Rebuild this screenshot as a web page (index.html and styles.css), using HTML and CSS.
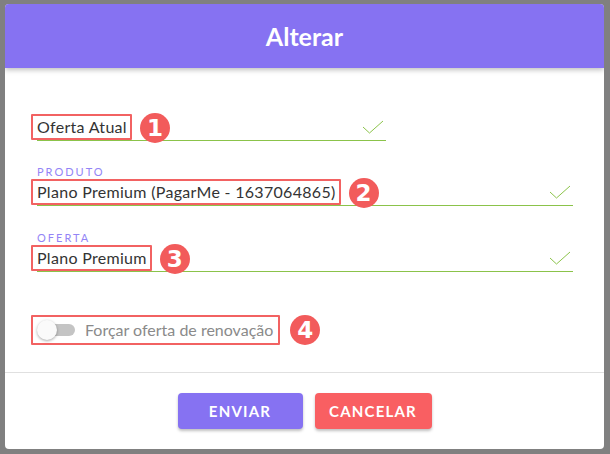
FILE: index.html
```html
<!DOCTYPE html>
<html>
<head>
  <title>Alterar</title>
  <link rel="stylesheet" href="styles.css">
</head>
<body>
  <div class="dialog">
    <div class="dialog-header">Alterar</div>

    <div class="dialog-body">
      <div class="field field-short">
        <div class="field-row">
          <span class="mark">Oferta Atual</span>
          <span class="badge">1</span>
          <svg class="check" width="22" height="14" viewBox="0 0 22 14"><polyline points="1,7 7.5,13 21,1" fill="none" stroke="#8bc34a" stroke-width="1"/></svg>
        </div>
      </div>

      <div class="field field-produto">
        <div class="field-label">Produto</div>
        <div class="field-row">
          <span class="mark">Plano Premium (PagarMe - 1637064865)</span>
          <span class="badge">2</span>
          <svg class="check" width="22" height="14" viewBox="0 0 22 14"><polyline points="1,7 7.5,13 21,1" fill="none" stroke="#8bc34a" stroke-width="1"/></svg>
        </div>
      </div>

      <div class="field field-oferta">
        <div class="field-label">Oferta</div>
        <div class="field-row">
          <span class="mark">Plano Premium</span>
          <span class="badge">3</span>
          <svg class="check" width="22" height="14" viewBox="0 0 22 14"><polyline points="1,7 7.5,13 21,1" fill="none" stroke="#8bc34a" stroke-width="1"/></svg>
        </div>
      </div>

      <div class="toggle-row">
        <label class="mark toggle">
          <span class="switch"><span class="knob"></span></span>
          <span class="toggle-text">Forçar oferta de renovação</span>
        </label>
        <span class="badge">4</span>
      </div>
    </div>

    <div class="dialog-footer">
      <button class="btn btn-send">Enviar</button>
      <button class="btn btn-cancel">Cancelar</button>
    </div>
  </div>
</body>
</html>
```

FILE: styles.css
```css
html, body {
  margin: 0;
  height: 100%;
}
body {
  background: #808080;
  padding: 4px 6px 5px 5px;
  box-sizing: border-box;
  font-family: Lato, "Open Sans", sans-serif;
}
.dialog {
  background: #fff;
  height: 445px;
  border-radius: 4px;
  overflow: hidden;
  display: flex;
  flex-direction: column;
}
.dialog-header {
  height: 64px;
  background: #8672f2;
  color: #fff;
  font-size: 25px;
  font-weight: bold;
  display: flex;
  align-items: center;
  justify-content: center;
  box-shadow: 0 2px 5px rgba(0, 0, 0, 0.25);
  position: relative;
}
.dialog-body {
  flex: 1;
  padding: 46px 31px 0 32px;
}
.field-short {
  width: 349px;
}
.field-produto {
  margin-top: 24px;
}
.field-oferta {
  margin-top: 25px;
}
.field-label {
  height: 14px;
  line-height: 14px;
  font-size: 11px;
  letter-spacing: 2px;
  text-transform: uppercase;
  color: #9384f6;
}
.field-row {
  display: flex;
  align-items: flex-end;
  height: 26px;
  border-bottom: 1px solid #8bc34a;
  font-size: 16px;
  color: #333;
}
.field-row .mark {
  letter-spacing: 0.3px;
}
.mark {
  border: 2px solid #f26262;
  margin-left: -6px;
  padding: 0 3px 0 4px;
  height: 22px;
  line-height: 22px;
  border-radius: 1px;
}
.badge {
  width: 30px;
  height: 30px;
  border-radius: 50%;
  background: #f25b5b;
  color: #fff;
  font-family: "DejaVu Sans", sans-serif;
  font-size: 23px;
  font-weight: bold;
  line-height: 30px;
  text-align: center;
  margin-left: 8px;
  flex-shrink: 0;
  align-self: center;
  margin-top: 2px;
}
.check {
  margin-left: auto;
  margin-right: 2px;
  margin-bottom: 6px;
}
.toggle-row {
  margin-top: 43px;
  display: flex;
  align-items: center;
  height: 30px;
}
.toggle {
  display: flex;
  align-items: center;
  height: 26px;
  padding: 0 5px 0 4px;
}
.switch {
  position: relative;
  width: 36px;
  height: 12px;
  border-radius: 6px;
  background: #c4c4c4;
  margin-left: 2px;
}
.knob {
  position: absolute;
  left: -2px;
  top: -4px;
  width: 20px;
  height: 20px;
  border-radius: 50%;
  background: #fafafa;
  box-shadow: 0 1px 3px rgba(0, 0, 0, 0.35);
}
.toggle-text {
  margin-left: 10px;
  font-size: 16px;
  color: #8a8a8a;
}
.toggle-row .badge {
  margin-left: 10px;
  margin-top: 0;
}
.dialog-footer {
  border-top: 1px solid #e0e0e0;
  padding: 20px 0;
  display: flex;
  justify-content: center;
  gap: 12px;
}
.btn {
  height: 36px;
  border: none;
  border-radius: 4px;
  color: #fff;
  font-family: Lato, sans-serif;
  font-size: 15px;
  font-weight: bold;
  letter-spacing: 1.2px;
  text-transform: uppercase;
  box-shadow: 0 2px 3px rgba(0, 0, 0, 0.25);
  cursor: pointer;
}
.btn-send {
  width: 125px;
  background: #8672f2;
}
.btn-cancel {
  width: 117px;
  background: #f95f62;
}
```
